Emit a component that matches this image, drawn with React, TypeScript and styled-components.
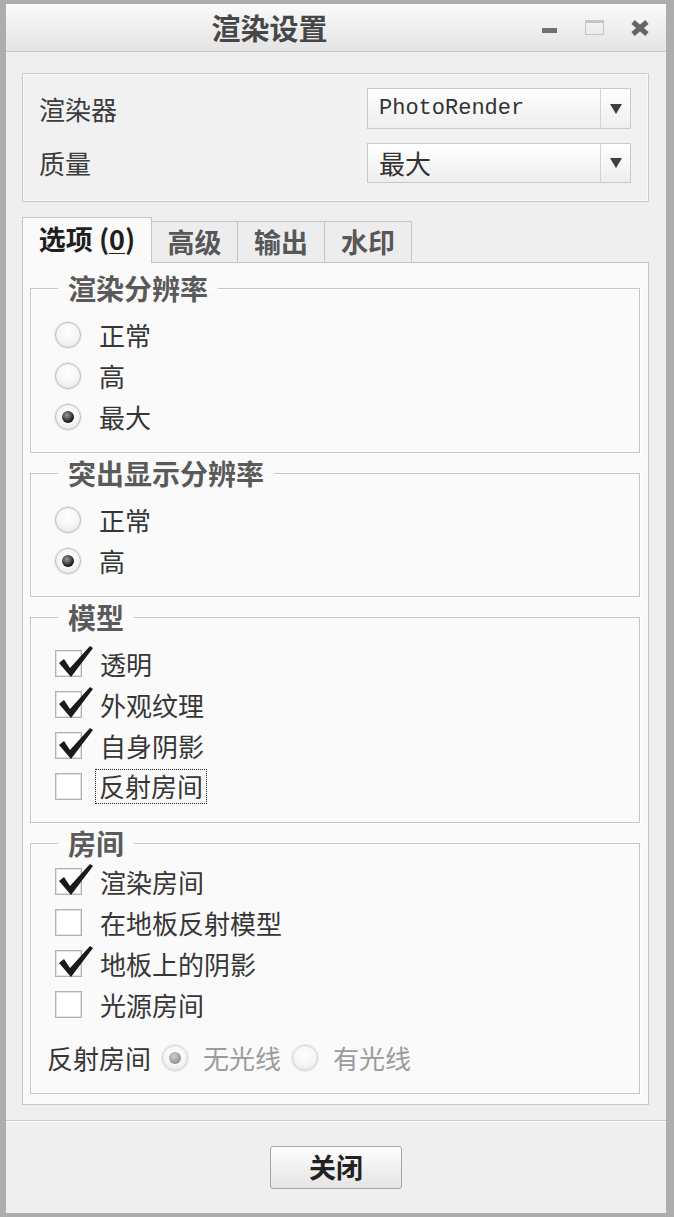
import React from "react";
import styled, { createGlobalStyle } from "styled-components";

const GlobalStyle = createGlobalStyle`
  html, body { margin: 0; padding: 0; background: #ffffff; }
  body { font-family: "Noto Sans CJK SC", "Noto Sans", sans-serif; }
  * { box-sizing: border-box; }
`;

const Window = styled.div`
  width: 674px;
  height: 1217px;
  display: flex;
  flex-direction: column;
  border-style: solid;
  border-color: #adadad;
  border-width: 4px 8px 4px 6px;
  background: #efefef;
`;

const TitleBar = styled.div`
  flex: none;
  height: 48px;
  display: flex;
  align-items: center;
  background: linear-gradient(#fbfbfb, #e3e3e3);
  border-bottom: 1px solid #c4c4c4;
`;

const Title = styled.div`
  flex: 1;
  text-align: center;
  padding-left: 6px;
  font-size: 29px;
  font-weight: 700;
  line-height: 1;
  color: #474747;
`;

const WinControls = styled.div`
  display: flex;
  padding-right: 4px;
`;

const WinButton = styled.div`
  width: 45px;
  height: 30px;
  display: flex;
  align-items: center;
  justify-content: center;
`;

const MinGlyph = styled.span`
  width: 15px;
  height: 5px;
  margin-top: 6px;
  background: #707070;
`;

const MaxGlyph = styled.span`
  width: 19px;
  height: 15px;
  border: 1px solid #c6c6c6;
  border-top-width: 3px;
`;

const Body = styled.div`
  flex: none;
  display: flex;
  flex-direction: column;
  padding: 21px 17px 0 16px;
`;

const TopBox = styled.div`
  height: 129px;
  display: flex;
  flex-direction: column;
  gap: 14px;
  padding: 14px 17px 0 16px;
  border: 1px solid #cbcbcb;
  box-shadow: inset 0 0 0 1px #f9f9f9;
  background: #f1f1f1;
`;

const FieldRow = styled.div<{ $h: number }>`
  height: ${(p) => p.$h}px;
  display: flex;
  align-items: center;
  justify-content: space-between;
`;

const FieldLabel = styled.span`
  font-size: 26px;
  line-height: 1;
  color: #3b3b3b;
`;

const Combo = styled.div`
  width: 264px;
  height: 100%;
  display: flex;
  border: 1px solid #c9c9c9;
  background: linear-gradient(#ffffff, #eeeeee);
`;

const ComboValue = styled.div<{ $mono?: boolean }>`
  flex: 1;
  display: flex;
  align-items: center;
  padding-left: 11px;
  color: #333333;
  line-height: 1;
  font-family: ${(p) =>
    p.$mono ? `"Liberation Mono", "DejaVu Sans Mono", monospace` : `"Noto Sans CJK SC", sans-serif`};
  font-size: ${(p) => (p.$mono ? "22px" : "26px")};
`;

const ComboArrow = styled.div`
  width: 30px;
  display: flex;
  align-items: center;
  justify-content: center;
  border-left: 1px solid #d3d3d3;
  &::after {
    content: "";
    border-left: 6px solid transparent;
    border-right: 6px solid transparent;
    border-top: 10px solid #3f3f3f;
  }
`;

const TabBar = styled.div`
  position: relative;
  z-index: 1;
  height: 46px;
  margin-top: 15px;
  margin-bottom: -1px;
  display: flex;
  align-items: flex-end;
`;

const Tab = styled.div<{ $active?: boolean; $w: number }>`
  width: ${(p) => p.$w}px;
  height: ${(p) => (p.$active ? 46 : 42)}px;
  margin-left: -1px;
  &:first-child { margin-left: 0; }
  display: flex;
  align-items: center;
  justify-content: center;
  padding-bottom: ${(p) => (p.$active ? 4 : 2)}px;
  border: 1px solid #c5c5c5;
  border-bottom: ${(p) => (p.$active ? "none" : "1px solid #c5c5c5")};
  background: ${(p) => (p.$active ? "#fafafa" : "#ededed")};
  font-size: 27px;
  font-weight: 700;
  line-height: 1;
  color: ${(p) => (p.$active ? "#1f1f1f" : "#575757")};
  white-space: pre;
`;

const Mnemonic = styled.span`
  text-decoration: underline;
  text-underline-offset: 3px;
  text-decoration-thickness: 1px;
`;

const Panel = styled.div`
  display: flex;
  flex-direction: column;
  gap: 2px;
  padding: 7px 8px 10px 7px;
  border: 1px solid #c5c5c5;
  background: #fafafa;
`;

const Group = styled.fieldset<{ $top?: number }>`
  margin: 0;
  min-width: 0;
  padding: ${(p) => p.$top ?? 8}px 0 15px 24px;
  border: 1px solid #c6c6c6;
  box-shadow: inset 1px 1px 0 #ffffff, 1px 1px 0 #ffffff;
`;

const Legend = styled.legend`
  margin-left: 3px;
  padding: 0 10px;
  font-size: 28px;
  font-weight: 700;
  line-height: 36px;
  color: #5a5a5a;
`;

const OptionRow = styled.div<{ $gap?: number }>`
  height: 41px;
  display: flex;
  align-items: center;
  gap: ${(p) => p.$gap ?? 18}px;
`;

const InlineRow = styled.div`
  height: 41px;
  margin-top: 12px;
  margin-left: -8px;
  display: flex;
  align-items: center;
  gap: 11px;
`;

const InlineOption = styled.div`
  display: flex;
  align-items: center;
  gap: 15px;
`;

const Text = styled.span<{ $dim?: boolean; $focus?: boolean }>`
  font-size: 26px;
  line-height: 1;
  color: ${(p) => (p.$dim ? "#9b9b9b" : "#363636")};
  ${(p) =>
    p.$focus
      ? `outline: 1px dotted #222; outline-offset: 0; padding: 3px 3px 4px; margin-left: -4px;`
      : ""}
`;

const RadioCircle = styled.span<{ $checked?: boolean; $disabled?: boolean }>`
  flex: none;
  width: 26px;
  height: 26px;
  border-radius: 50%;
  display: flex;
  align-items: center;
  justify-content: center;
  border: 1px solid ${(p) => (p.$disabled ? "#d4d4d4" : "#bcbcbc")};
  background: radial-gradient(circle at 50% 35%, #ffffff 0%, #f5f5f5 55%, #e0e0e0 100%);
  box-shadow: 0 0 0 1px #ebebeb;
  &::after {
    content: "";
    display: ${(p) => (p.$checked ? "block" : "none")};
    width: 12px;
    height: 12px;
    border-radius: 50%;
    background: ${(p) =>
      p.$disabled
        ? "radial-gradient(circle at 40% 35%, #d0d0d0, #8e8e8e 75%)"
        : "radial-gradient(circle at 40% 35%, #9a9a9a, #151515 70%)"};
  }
`;

const CheckBox = styled.span`
  flex: none;
  position: relative;
  width: 27px;
  height: 27px;
  border: 1px solid #b2b2b2;
  box-shadow: inset 0 0 0 1px #e2e2e2;
  background: #ffffff;
`;

const CheckMark = styled.svg`
  position: absolute;
  left: 1px;
  top: -5px;
  width: 37px;
  height: 34px;
  overflow: visible;
`;

const Footer = styled.div`
  flex: 1;
  margin-top: 15px;
  display: flex;
  align-items: center;
  justify-content: center;
  border-top: 1px solid #cdcdcd;
  box-shadow: inset 0 1px 0 #ffffff;
`;

const Button = styled.button`
  width: 132px;
  height: 43px;
  border: 1px solid #a6a6a6;
  border-radius: 3px;
  background: linear-gradient(#fefefe, #e4e4e4);
  box-shadow: inset 0 1px 0 #ffffff;
  font-family: "Noto Sans CJK SC", sans-serif;
  font-size: 27px;
  font-weight: 700;
  line-height: 1;
  color: #222222;
  padding: 0 0 2px;
`;

const Radio = ({ label, checked }: { label: string; checked?: boolean }) => (
  <OptionRow>
    <RadioCircle $checked={checked} />
    <Text>{label}</Text>
  </OptionRow>
);

const Check = ({ label, checked, focus }: { label: string; checked?: boolean; focus?: boolean }) => (
  <OptionRow>
    <CheckBox>
      {checked && (
        <CheckMark viewBox="0 0 37 34">
          <path d="M2 17 L7 13 L13 22 L33 0 L36 2 L14 31 Z" fill="#1a1a1a" />
        </CheckMark>
      )}
    </CheckBox>
    <Text $focus={focus}>{label}</Text>
  </OptionRow>
);

export default function App() {
  return (
    <>
      <GlobalStyle />
      <Window>
        <TitleBar>
          <Title>渲染设置</Title>
          <WinControls>
            <WinButton>
              <MinGlyph />
            </WinButton>
            <WinButton>
              <MaxGlyph />
            </WinButton>
            <WinButton>
              <svg width="20" height="16" viewBox="0 0 20 16">
                <path d="M3 2 L17 14 M17 2 L3 14" stroke="#646464" strokeWidth="5" />
              </svg>
            </WinButton>
          </WinControls>
        </TitleBar>

        <Body>
          <TopBox>
            <FieldRow $h={41}>
              <FieldLabel>渲染器</FieldLabel>
              <Combo>
                <ComboValue $mono>PhotoRender</ComboValue>
                <ComboArrow />
              </Combo>
            </FieldRow>
            <FieldRow $h={40}>
              <FieldLabel>质量</FieldLabel>
              <Combo>
                <ComboValue>最大</ComboValue>
                <ComboArrow />
              </Combo>
            </FieldRow>
          </TopBox>

          <TabBar>
            <Tab $active $w={130}>
              选项 (<Mnemonic>0</Mnemonic>)
            </Tab>
            <Tab $w={87}>高级</Tab>
            <Tab $w={88}>输出</Tab>
            <Tab $w={88}>水印</Tab>
          </TabBar>

          <Panel>
            <Group>
              <Legend>渲染分辨率</Legend>
              <Radio label="正常" />
              <Radio label="高" />
              <Radio label="最大" checked />
            </Group>

            <Group>
              <Legend>突出显示分辨率</Legend>
              <Radio label="正常" />
              <Radio label="高" checked />
            </Group>

            <Group>
              <Legend>模型</Legend>
              <Check label="透明" checked />
              <Check label="外观纹理" checked />
              <Check label="自身阴影" checked />
              <Check label="反射房间" focus />
            </Group>

            <Group $top={0}>
              <Legend>房间</Legend>
              <Check label="渲染房间" checked />
              <Check label="在地板反射模型" />
              <Check label="地板上的阴影" checked />
              <Check label="光源房间" />
              <InlineRow>
                <Text>反射房间</Text>
                <InlineOption>
                  <RadioCircle $checked $disabled />
                  <Text $dim>无光线</Text>
                </InlineOption>
                <InlineOption>
                  <RadioCircle $disabled />
                  <Text $dim>有光线</Text>
                </InlineOption>
              </InlineRow>
            </Group>
          </Panel>
        </Body>

        <Footer>
          <Button>关闭</Button>
        </Footer>
      </Window>
    </>
  );
}
